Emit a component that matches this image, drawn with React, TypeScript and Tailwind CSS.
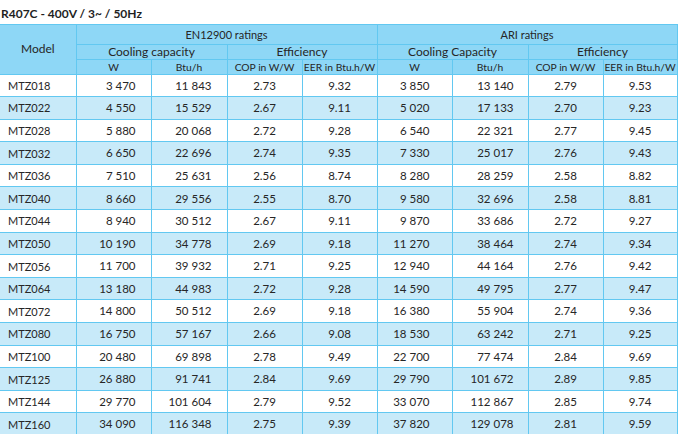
import React from 'react';

type Row = [string, string, string, string, string, string, string, string, string];

const rows: Row[] = [
  ['MTZ018', '3 470', '11 843', '2.73', '9.32', '3 850', '13 140', '2.79', '9.53'],
  ['MTZ022', '4 550', '15 529', '2.67', '9.11', '5 020', '17 133', '2.70', '9.23'],
  ['MTZ028', '5 880', '20 068', '2.72', '9.28', '6 540', '22 321', '2.77', '9.45'],
  ['MTZ032', '6 650', '22 696', '2.74', '9.35', '7 330', '25 017', '2.76', '9.43'],
  ['MTZ036', '7 510', '25 631', '2.56', '8.74', '8 280', '28 259', '2.58', '8.82'],
  ['MTZ040', '8 660', '29 556', '2.55', '8.70', '9 580', '32 696', '2.58', '8.81'],
  ['MTZ044', '8 940', '30 512', '2.67', '9.11', '9 870', '33 686', '2.72', '9.27'],
  ['MTZ050', '10 190', '34 778', '2.69', '9.18', '11 270', '38 464', '2.74', '9.34'],
  ['MTZ056', '11 700', '39 932', '2.71', '9.25', '12 940', '44 164', '2.76', '9.42'],
  ['MTZ064', '13 180', '44 983', '2.72', '9.28', '14 590', '49 795', '2.77', '9.47'],
  ['MTZ072', '14 800', '50 512', '2.69', '9.18', '16 380', '55 904', '2.74', '9.36'],
  ['MTZ080', '16 750', '57 167', '2.66', '9.08', '18 530', '63 242', '2.71', '9.25'],
  ['MTZ100', '20 480', '69 898', '2.78', '9.49', '22 700', '77 474', '2.84', '9.69'],
  ['MTZ125', '26 880', '91 741', '2.84', '9.69', '29 790', '101 672', '2.89', '9.85'],
  ['MTZ144', '29 770', '101 604', '2.79', '9.52', '33 070', '112 867', '2.85', '9.74'],
  ['MTZ160', '34 090', '116 348', '2.75', '9.39', '37 820', '129 078', '2.81', '9.59'],
];

const widths = ['w-[76px]', 'w-[75px]', 'w-[76px]', 'w-[75px]', 'w-[75px]', 'w-[75px]', 'w-[76px]', 'w-[75px]', 'w-[74px]'];

const cell = 'border-[1.5px] border-[#62c8f1] p-0 whitespace-nowrap overflow-hidden';
const head = `${cell} font-normal`;
const unit = `${head} text-[10.3px]`;

export default function App() {
  return (
    <div className="w-[680px] h-[434px] overflow-hidden bg-white text-[#262626] font-['Lato','Noto_Sans',sans-serif]">
      <h1 className="h-[24px] pl-px pt-[8px] text-[12px] leading-[12px] font-bold text-[#1f1f1f]">
        R407C - 400V / 3~ / 50Hz
      </h1>
      <table className="border-collapse table-fixed w-[677px] text-[11.5px] leading-none">
        <colgroup>
          {widths.map((w, i) => (
            <col key={i} className={w} />
          ))}
        </colgroup>
        <thead className="bg-[#8ed7f6]">
          <tr className="h-[19.5px]">
            <th rowSpan={3} className={`${head} text-[12px] border-l-0`}>Model</th>
            <th colSpan={4} className={`${head} text-[11px]`}>EN12900 ratings</th>
            <th colSpan={4} className={`${head} text-[11px]`}>ARI ratings</th>
          </tr>
          <tr className="h-[15.5px]">
            <th colSpan={2} className={`${head} text-[12px]`}>Cooling capacity</th>
            <th colSpan={2} className={`${head} text-[12px]`}>Efficiency</th>
            <th colSpan={2} className={`${head} text-[12px]`}>Cooling Capacity</th>
            <th colSpan={2} className={`${head} text-[12px]`}>Efficiency</th>
          </tr>
          <tr className="h-[14.5px]">
            <th className={unit}>W</th>
            <th className={unit}>Btu/h</th>
            <th className={unit}>COP in W/W</th>
            <th className={unit}>EER in Btu.h/W</th>
            <th className={unit}>W</th>
            <th className={unit}>Btu/h</th>
            <th className={unit}>COP in W/W</th>
            <th className={unit}>EER in Btu.h/W</th>
          </tr>
        </thead>
        <tbody>
          {rows.map((r, i) => (
            <tr key={r[0]} className={`h-[22.6px] ${i % 2 === 1 ? 'bg-[#c8eaf9]' : 'bg-white'}`}>
              <td className={`${cell} pl-[8px] text-[11px] border-l-0`}>{r[0]}</td>
              <td className={`${cell} text-right pr-[15px]`}>{r[1]}</td>
              <td className={`${cell} text-right pr-[15px]`}>{r[2]}</td>
              <td className={`${cell} text-center`}>{r[3]}</td>
              <td className={`${cell} text-center`}>{r[4]}</td>
              <td className={`${cell} text-right pr-[22px]`}>{r[5]}</td>
              <td className={`${cell} text-right pr-[14px]`}>{r[6]}</td>
              <td className={`${cell} text-center`}>{r[7]}</td>
              <td className={`${cell} text-center`}>{r[8]}</td>
            </tr>
          ))}
        </tbody>
      </table>
    </div>
  );
}
